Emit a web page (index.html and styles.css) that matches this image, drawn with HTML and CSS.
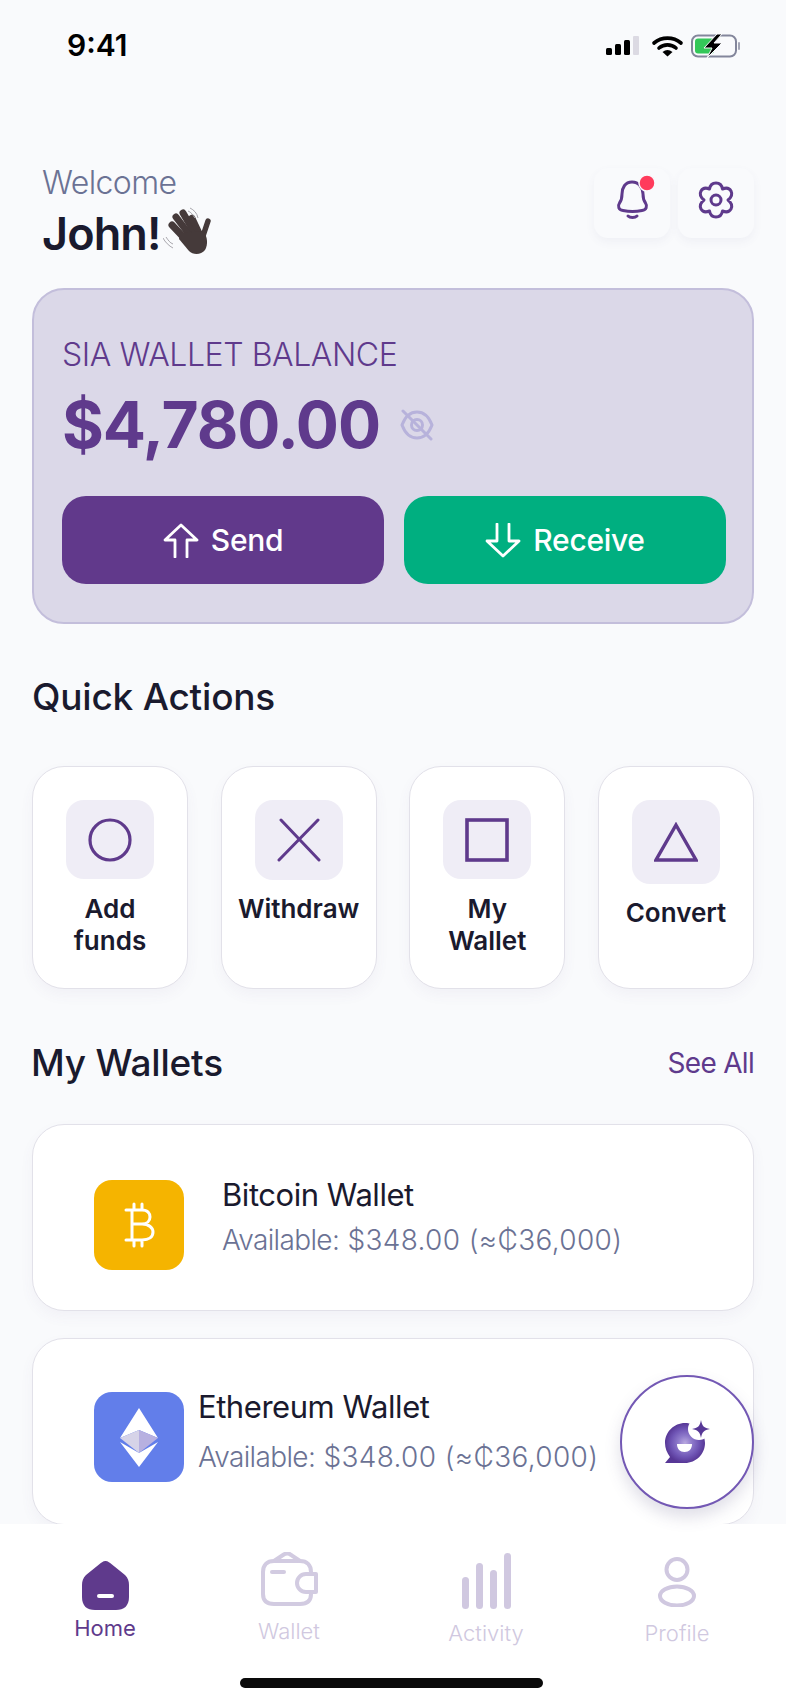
FILE: index.html
```html
<!DOCTYPE html>
<html lang="en">
<head>
    <meta charset="UTF-8">
    <meta name="viewport" content="width=device-width, initial-scale=1.0">
    <title>SIA Wallet</title>
    <link rel="stylesheet" href="styles.css">
</head>
<body>
    <div class="app">
        <div class="status-bar">
            <span class="time">9:41</span>
            <svg class="status-icons" width="136" height="26" viewBox="0 0 136 26">
                <rect x="2" y="14" width="6" height="7" rx="1.5" fill="#000"/>
                <rect x="11" y="10" width="6" height="11" rx="1.5" fill="#000"/>
                <rect x="20" y="6" width="6" height="15" rx="1.5" fill="#000"/>
                <rect x="29" y="2" width="6" height="19" rx="1" fill="#dcdae3"/>
                <path d="M50 9 a21 21 0 0 1 27 0" fill="none" stroke="#000" stroke-width="3.6" stroke-linecap="round"/>
                <path d="M55 14 a13 13 0 0 1 17 0" fill="none" stroke="#000" stroke-width="3.6" stroke-linecap="round"/>
                <path d="M58.5 18 a8 8 0 0 1 10 0 L63.5 22.5Z" fill="#000"/>
                <rect x="88" y="1.5" width="44" height="21" rx="6" fill="none" stroke="#83869b" stroke-width="2"/>
                <rect x="91" y="4.5" width="19" height="15" rx="3" fill="#34c759"/>
                <rect x="134" y="8" width="2" height="8" rx="1" fill="#a3a5b5"/>
                <path d="M113 0 L100 14 H108 L103 24 L118 9 H110 L118 0Z" fill="#000" stroke="#f9fafc" stroke-width="1"/>
            </svg>
        </div>

        <div class="content">
            <div class="header">
                <div class="greeting">
                    <div class="welcome">Welcome</div>
                    <div class="name">
                        John!
                        <svg class="wave" width="48" height="48" viewBox="0 0 48 48">
                            <g fill="none" stroke="#453a3a" stroke-linecap="round">
                                <path d="M26 36 L9 18" stroke-width="7"/>
                                <path d="M29 31 L13 10" stroke-width="7"/>
                                <path d="M33 28 L20 6" stroke-width="7"/>
                                <path d="M37 28 L29 11" stroke-width="6.5"/>
                                <path d="M39 32 L45 14" stroke-width="5.5"/>
                            </g>
                            <path d="M17 26 L40 24 C45 30 45 38 42 43 C38 48 30 48 26 44 L16 32Z" fill="#453a3a"/>
                            <g fill="none" stroke="#a9a7ad" stroke-width="1">
                                <path d="M27 1 C31 3 34 6 35 11"/>
                                <path d="M25 4 C28 5 30 8 32 11"/>
                                <path d="M0 31 C2 35 6 39 10 41"/>
                                <path d="M3 30 C5 33 7 36 10 37"/>
                            </g>
                        </svg>
                    </div>
                </div>
                <div class="header-actions">
                    <div class="icon-btn">
                        <svg width="48" height="44" viewBox="0 0 48 44">
                            <g transform="translate(6,-3)">
                                <path d="M18 7 C11 7 8 13 8 19 C8 24 7 26 5.500 28 C3.500 31 4.500 35 9 35.500 C14 36.500 23 36.500 28 35.500 C32.500 35 33.500 31 31.500 28 C30 26 29 24 29 19 C29 13 25 7 18 7Z" fill="none" stroke="#5f3a8c" stroke-width="3"/>
                                <path d="M14 41 C16 43 21 43 23 41" fill="none" stroke="#5f3a8c" stroke-width="3" stroke-linecap="round"/>
                            </g>
                            <circle cx="39" cy="5" r="8" fill="#ff3b5c" stroke="#f9fafc" stroke-width="1.500"/>
                        </svg>
                    </div>
                    <div class="icon-btn">
                        <svg width="36" height="38" viewBox="0 0 36 38">
                            <path d="M18 2 C22 2 24 5 24.500 8 C27 7 31 6.500 33 10 C35 14 32.500 17 30 19 C32.500 21 35 24 33 28 C31 31.500 27 31 24.500 30 C24 33 22 36 18 36 C14 36 12 33 11.500 30 C9 31 5 31.500 3 28 C1 24 3.500 21 6 19 C3.500 17 1 14 3 10 C5 6.500 9 7 11.500 8 C12 5 14 2 18 2Z" fill="none" stroke="#5f3a8c" stroke-width="3" stroke-linejoin="round"/>
                            <circle cx="18" cy="19" r="5" fill="none" stroke="#5f3a8c" stroke-width="3"/>
                        </svg>
                    </div>
                </div>
            </div>

            <div class="balance-card">
                <div class="balance-label">SIA WALLET BALANCE</div>
                <div class="balance-row">
                    <span class="balance-amount">$4,780.00</span>
                    <svg width="34" height="32" viewBox="0 0 34 32">
                        <path d="M2 16 C5 8 10 3 17 3 C24 3 29 8 32 16 C29 24 24 29 17 29 C10 29 5 24 2 16Z" fill="none" stroke="#b7b2db" stroke-width="3"/>
                        <circle cx="17" cy="16" r="5.500" fill="none" stroke="#b7b2db" stroke-width="3"/>
                        <path d="M3 2 L31 30" stroke="#b7b2db" stroke-width="3" stroke-linecap="round"/>
                    </svg>
                </div>
                <div class="balance-buttons">
                    <div class="balance-btn send">
                        <svg width="36" height="35" viewBox="0 0 36 35">
                            <path d="M12 34 V17 H2 L18 2 L34 17 H24 V34" fill="none" stroke="#fff" stroke-width="2.800" stroke-linejoin="round" stroke-linecap="round"/>
                        </svg>
                        Send
                    </div>
                    <div class="balance-btn receive">
                        <svg width="36" height="35" viewBox="0 0 36 35">
                            <path d="M12 1 V18 H2 L18 33 L34 18 H24 V1" fill="none" stroke="#fff" stroke-width="2.800" stroke-linejoin="round" stroke-linecap="round"/>
                        </svg>
                        Receive
                    </div>
                </div>
            </div>

            <h2 class="section-title">Quick Actions</h2>
            <div class="actions">
                <div class="action">
                    <div class="action-tile">
                        <svg width="44" height="44" viewBox="0 0 44 44"><circle cx="22" cy="22" r="20" fill="none" stroke="#5f3a8c" stroke-width="3.200"/></svg>
                    </div>
                    <div class="action-label">Add<br>funds</div>
                </div>
                <div class="action action-withdraw">
                    <div class="action-tile">
                        <svg width="44" height="44" viewBox="0 0 44 44"><path d="M4 2 L42 42 M41 2 L2 42" fill="none" stroke="#5f3a8c" stroke-width="3" stroke-linecap="round"/></svg>
                    </div>
                    <div class="action-label">Withdraw</div>
                </div>
                <div class="action">
                    <div class="action-tile">
                        <svg width="44" height="44" viewBox="0 0 44 44"><rect x="2" y="2" width="40" height="40" fill="none" stroke="#5f3a8c" stroke-width="3.600"/></svg>
                    </div>
                    <div class="action-label">My<br>Wallet</div>
                </div>
                <div class="action action-convert">
                    <div class="action-tile">
                        <svg width="44" height="40" viewBox="0 0 44 40"><path d="M22 3 L42 38 H2Z" fill="none" stroke="#5f3a8c" stroke-width="3.400"/></svg>
                    </div>
                    <div class="action-label">Convert</div>
                </div>
            </div>

            <div class="section-row">
                <h2 class="section-title">My Wallets</h2>
                <span class="see-all">See All</span>
            </div>

            <div class="wallet wallet-btc">
                <div class="coin coin-btc">
                    <svg width="32" height="46" viewBox="0 0 32 46">
                        <path d="M3 8 H19 C25 8 27 12 27 15 C27 19 24 22 19 22 C26 22 30 26 30 30 C30 35 26 38 19 38 H3 M9 8 V38 M9 22 H19 M11 2 V8 M19 2 V8 M11 38 V44 M19 38 V44" fill="none" stroke="#fff" stroke-width="3" stroke-linecap="round"/>
                    </svg>
                </div>
                <div class="wallet-text">
                    <div class="wallet-name">Bitcoin Wallet</div>
                    <div class="wallet-available"><span class="available-key">Available:</span> $348.00 (≈₵36,000)</div>
                </div>
            </div>

            <div class="wallet wallet-eth">
                <div class="coin coin-eth">
                    <svg width="40" height="60" viewBox="0 0 40 60">
                        <path d="M20 1 L39 31 L20 23 L1 31Z" fill="#fff"/>
                        <path d="M20 23 L1 31 L20 46Z" fill="#d6d3e8"/>
                        <path d="M20 23 L39 31 L20 46Z" fill="#b7b0e0"/>
                        <path d="M1 35 L20 46 L39 35 L20 60Z" fill="#fff"/>
                    </svg>
                </div>
                <div class="wallet-text">
                    <div class="wallet-name">Ethereum Wallet</div>
                    <div class="wallet-available"><span class="available-key">Available:</span> $348.00 (≈₵36,000)</div>
                </div>
            </div>
        </div>

        <div class="fab">
            <svg width="48" height="48" viewBox="0 0 48 48">
                <defs>
                    <radialGradient id="orb" cx="50%" cy="50%" r="50%">
                        <stop offset="0%" stop-color="#b9a9e0"/>
                        <stop offset="35%" stop-color="#8e7acb"/>
                        <stop offset="70%" stop-color="#6f55b5"/>
                        <stop offset="100%" stop-color="#573796"/>
                    </radialGradient>
                </defs>
                <path d="M22 5 C33 5 42 14 42 25 C42 36 33 45 22 45 H2 L7 39 C4 35 2 30 2 25 C2 14 11 5 22 5Z" fill="url(#orb)"/>
                <circle cx="36" cy="11" r="11" fill="#fff"/>
                <path d="M38 2 C39 8 41 10 47 11 C41 12 39 14 38 20 C37 14 35 12 29 11 C35 10 37 8 38 2Z" fill="#573796"/>
                <path d="M14 26 H29 C29 31 26 34 21.500 34 C17 34 14 31 14 26Z" fill="#fff"/>
            </svg>
        </div>

        <div class="tabbar">
            <div class="tabs">
                <div class="tab tab-home active">
                    <svg width="47" height="49" viewBox="0 0 47 49">
                        <path d="M23.500 0 C26 0 28 2 30 3.500 L43 14 C46 17 47 20 47 24 V36 C47 45 42 49 34 49 H13 C5 49 0 45 0 36 V24 C0 20 1 17 4 14 L17 3.500 C19 2 21 0 23.500 0Z" fill="#5f3a8c"/>
                        <rect x="15" y="33" width="17" height="4" rx="2" fill="#fff"/>
                    </svg>
                    <span>Home</span>
                </div>
                <div class="tab tab-wallet">
                    <svg width="58" height="54" viewBox="0 0 58 54">
                        <path d="M14 9 H40 C47 9 51 13 51 20 V42 C51 49 47 52 40 52 H14 C7 52 3 49 3 42 V20 C3 13 7 9 14 9Z" fill="none" stroke="#d2cbe1" stroke-width="4"/>
                        <path d="M14 9 L23 3 C26 1 29 1 31 3 L40 9" fill="none" stroke="#d2cbe1" stroke-width="4"/>
                        <path d="M12 20 H24" stroke="#d2cbe1" stroke-width="4" stroke-linecap="round"/>
                        <path d="M56 22 H46 C41 22 37 26 37 31 C37 36 41 40 46 40 H56Z" fill="#fff" stroke="#d2cbe1" stroke-width="4" stroke-linejoin="round"/>
                    </svg>
                    <span>Wallet</span>
                </div>
                <div class="tab tab-activity">
                    <svg width="49" height="56" viewBox="0 0 49 56">
                        <rect x="0" y="24" width="7" height="32" rx="3.500" fill="#d0c8e0"/>
                        <rect x="14" y="10" width="7" height="46" rx="3.500" fill="#d0c8e0"/>
                        <rect x="28" y="17" width="7" height="39" rx="3.500" fill="#d0c8e0"/>
                        <rect x="42" y="0" width="7" height="56" rx="3.500" fill="#d0c8e0"/>
                    </svg>
                    <span>Activity</span>
                </div>
                <div class="tab tab-profile">
                    <svg width="38" height="50" viewBox="0 0 38 50">
                        <circle cx="19" cy="12.500" r="10.500" fill="none" stroke="#d0c8e0" stroke-width="4"/>
                        <ellipse cx="19" cy="39" rx="17" ry="9.500" fill="none" stroke="#d0c8e0" stroke-width="4"/>
                    </svg>
                    <span>Profile</span>
                </div>
            </div>
            <div class="home-bar"></div>
        </div>
    </div>
</body>
</html>
```

FILE: styles.css
```css
* {
    margin: 0;
    padding: 0;
    box-sizing: border-box;
}

body {
    font-family: Inter, 'Liberation Sans', sans-serif;
    background: #f9fafc;
    color: #1a1a2e;
    overflow: hidden;
}

.app {
    position: relative;
    display: flex;
    flex-direction: column;
    width: 786px;
    height: 1704px;
    overflow: hidden;
}

.status-bar {
    display: flex;
    justify-content: space-between;
    align-items: flex-start;
    flex: none;
    height: 90px;
    padding: 27px 46px 0 67px;
}

.time {
    font-size: 30px;
    line-height: 36px;
    font-weight: 600;
    color: #000;
}

.status-icons {
    margin-top: 7px;
}

.content {
    flex: 1;
    min-height: 0;
    overflow: hidden;
    padding: 0 32px;
}

.header {
    display: flex;
    justify-content: space-between;
    align-items: flex-start;
    height: 125px;
    margin-top: 73px;
    padding-left: 10px;
}

.welcome {
    font-size: 32px;
    line-height: 40px;
    font-weight: 300;
    letter-spacing: -0.6px;
    color: #6b7294;
}

.name {
    display: flex;
    align-items: flex-start;
    margin-top: 3px;
    font-size: 45px;
    line-height: 56px;
    font-weight: 600;
    letter-spacing: -0.9px;
    color: #1a1a2e;
}

.wave {
    margin: 1px 0 0 2px;
}

.header-actions {
    display: flex;
    gap: 8px;
    margin-top: 5px;
}

.icon-btn {
    display: flex;
    align-items: center;
    justify-content: center;
    width: 76px;
    height: 70px;
    padding-bottom: 6px;
    background: #f9fafc;
    border-radius: 14px;
    box-shadow: 0 4px 10px rgba(90, 80, 130, 0.06);
}

.icon-btn svg {
    overflow: visible;
}

.balance-card {
    padding: 45px 26px 38px 28px;
    background: #dbd8e8;
    border: 2px solid #c3bedb;
    border-radius: 32px;
}

.balance-label {
    font-size: 32px;
    line-height: 40px;
    font-weight: 300;
    letter-spacing: -0.42px;
    color: #5f3a8c;
}

.balance-row {
    display: flex;
    align-items: center;
    gap: 20px;
    margin-top: 12px;
}

.balance-amount {
    font-size: 64px;
    line-height: 76px;
    font-weight: 700;
    letter-spacing: -1.1px;
    color: #5f3a8c;
}

.balance-buttons {
    display: flex;
    gap: 20px;
    margin-top: 33px;
}

.balance-btn {
    display: flex;
    align-items: center;
    justify-content: center;
    gap: 12px;
    flex: 1;
    height: 88px;
    border-radius: 24px;
    font-size: 30px;
    font-weight: 550;
    letter-spacing: -0.3px;
    color: #fff;
}

.send {
    background: #61398b;
}

.receive {
    background: #00af80;
}

.section-title {
    font-size: 37px;
    line-height: 44px;
    font-weight: 550;
    letter-spacing: -0.2px;
    color: #1a1a2e;
}

.balance-card + .section-title {
    margin-top: 51px;
}

.actions {
    display: flex;
    justify-content: space-between;
    margin-top: 47px;
}

.action {
    display: flex;
    flex-direction: column;
    align-items: center;
    width: 156px;
    height: 223px;
    padding-top: 33px;
    background: #fff;
    border: 1px solid #e2e1e9;
    border-radius: 32px;
    box-shadow: 0 6px 14px rgba(90, 80, 130, 0.05);
}

.action-tile {
    display: flex;
    align-items: center;
    justify-content: center;
    width: 88px;
    height: 79px;
    background: #efedf6;
    border-radius: 18px;
}

.action-label {
    margin-top: 14px;
    font-size: 26px;
    line-height: 32px;
    font-weight: 600;
    text-align: center;
    color: #1a1a2e;
}

.action-withdraw .action-tile {
    height: 80px;
}

.action-withdraw .action-label {
    margin-top: 13px;
}

.action-convert .action-tile {
    height: 84px;
}

.action-convert .action-label {
    margin-top: 13px;
}

.section-row {
    display: flex;
    justify-content: space-between;
    align-items: center;
    margin: 52px 0 39px -1px;
}

.see-all {
    font-size: 28px;
    font-weight: 400;
    letter-spacing: -0.7px;
    color: #5f3a8c;
}

.wallet {
    display: flex;
    align-items: flex-start;
    gap: 38px;
    height: 187px;
    padding: 55px 0 0 61px;
    background: #fff;
    border: 1px solid #e2e1e9;
    border-radius: 32px;
    box-shadow: 0 6px 14px rgba(90, 80, 130, 0.05);
}

.wallet-eth {
    gap: 14px;
    margin-top: 27px;
    padding-top: 53px;
}

.coin {
    display: flex;
    align-items: center;
    justify-content: center;
    flex: none;
    width: 90px;
    height: 90px;
    border-radius: 18px;
}

.coin-btc {
    background: #f5b400;
}

.coin-eth {
    background: #627eea;
}

.wallet-text {
    margin-top: -5px;
}

.wallet-name {
    font-size: 31px;
    line-height: 40px;
    letter-spacing: -0.45px;
    color: #1a1a2e;
}

.wallet-available {
    margin-top: 5px;
    font-size: 28px;
    line-height: 40px;
    font-weight: 300;
    letter-spacing: 0.36px;
    color: #6b7294;
}

.available-key {
    letter-spacing: -0.65px;
}

.wallet-eth .wallet-available {
    margin-top: 10px;
}

.fab {
    position: absolute;
    right: 32px;
    bottom: 195px;
    display: flex;
    align-items: center;
    justify-content: center;
    width: 134px;
    height: 134px;
    background: #fff;
    border: 2px solid #7358b4;
    border-radius: 50%;
    box-shadow: 0 8px 16px rgba(80, 70, 120, 0.18);
}

.tabbar {
    flex: none;
    height: 180px;
    background: #fff;
}

.tabs {
    display: grid;
    grid-template-columns: 180px 188px 206px 176px;
    height: 154px;
    padding-left: 15px;
}

.tab {
    display: flex;
    flex-direction: column;
    align-items: center;
    font-size: 22px;
    line-height: 30px;
    font-weight: 300;
    color: #d0c8e0;
}

.tab.active {
    color: #5f3a8c;
    font-weight: 400;
}

.tab-home {
    padding-top: 37px;
    gap: 3px;
}

.tab-wallet {
    padding-top: 28px;
    gap: 10px;
}

.tab-activity {
    padding-top: 29px;
    gap: 9px;
}

.tab-profile {
    padding-top: 33px;
    gap: 11px;
}

.home-bar {
    width: 303px;
    height: 10px;
    margin-left: 240px;
    background: #0a0a0a;
    border-radius: 5px;
}
```
